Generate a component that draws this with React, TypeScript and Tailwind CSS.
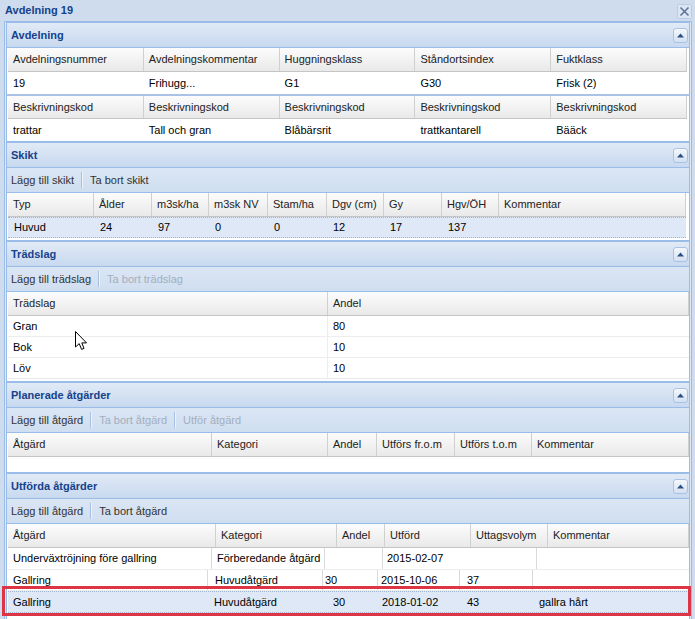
import React from 'react';

type Col = { label: string; w: string };

// collapse tool on panel headers
const ToolIcon = () => (
  <svg width="15" height="15" viewBox="0 0 15 15">
    <defs>
      <linearGradient id="toolbg" x1="0" y1="0" x2="0" y2="1">
        <stop offset="0" stopColor="#f5f8fc" />
        <stop offset="1" stopColor="#d3e0f1" />
      </linearGradient>
    </defs>
    <rect x="0.5" y="0.5" width="14" height="14" rx="2.5" fill="url(#toolbg)" stroke="#a9c1e2" />
    <path d="M4 9.5 L11 9.5 L7.5 5.5 Z" fill="#2c4f87" />
  </svg>
);

const CloseIcon = () => (
  <svg width="15" height="15" viewBox="0 0 15 15">
    <rect x="0.5" y="0.5" width="14" height="14" rx="1" fill="#dbe5f3" stroke="#b9cce6" />
    <path d="M3.5 3.5 L11.5 11.5 M11.5 3.5 L3.5 11.5" stroke="#5f7394" strokeWidth="1.6" />
  </svg>
);

const PanelHeader = ({ title }: { title: string }) => (
  <div className="flex h-[25px] items-center justify-between border-b border-[#99bce8] bg-linear-to-b from-[#e1eaf6] to-[#c8d9ef] pl-[4px] pr-[1px]">
    <span className="font-bold text-[#15428b]">{title}</span>
    <ToolIcon />
  </div>
);

const Toolbar = ({ items }: { items: { label: string; disabled?: boolean }[] }) => (
  <div className="flex h-[25px] items-center border-b border-[#99bce8] bg-linear-to-b from-[#dbe6f4] to-[#cfdef0] pl-[4px]">
    {items.map((it, i) => (
      <React.Fragment key={it.label}>
        {i > 0 && (
          <span className="mx-[7px] h-[16px] w-[2px] border-l border-r border-l-[#a7c0e2] border-r-[#eef3fa]" />
        )}
        <span className={it.disabled ? 'text-[#a3aec0]' : 'text-[#333]'}>{it.label}</span>
      </React.Fragment>
    ))}
  </div>
);

const GridHeader = ({ cols }: { cols: Col[] }) => (
  <div className="flex h-[24px] border-b border-[#c5c5c5] bg-linear-to-b from-[#fcfcfc] to-[#e9e9e9]">
    {cols.map((c) => (
      <div
        key={c.label}
        className={`${c.w} flex items-center overflow-hidden whitespace-nowrap border-r border-[#d0d0d0] pl-[5px] text-[#222]`}
      >
        {c.label}
      </div>
    ))}
  </div>
);

const skiktCols: Col[] = [
  { label: 'Typ', w: 'w-[86px]' },
  { label: 'Ålder', w: 'w-[58px]' },
  { label: 'm3sk/ha', w: 'w-[57px]' },
  { label: 'm3sk NV', w: 'w-[59px]' },
  { label: 'Stam/ha', w: 'w-[59px]' },
  { label: 'Dgv (cm)', w: 'w-[57px]' },
  { label: 'Gy', w: 'w-[58px]' },
  { label: 'Hgv/ÖH', w: 'w-[57px]' },
  { label: 'Kommentar', w: 'flex-1' },
];
const skiktRow = ['Huvud', '24', '97', '0', '0', '12', '17', '137', ''];

const tradslag = [
  ['Gran', '80'],
  ['Bok', '10'],
  ['Löv', '10'],
];

const planCols: Col[] = [
  { label: 'Åtgärd', w: 'w-[204px]' },
  { label: 'Kategori', w: 'w-[116px]' },
  { label: 'Andel', w: 'w-[49px]' },
  { label: 'Utförs fr.o.m', w: 'w-[78px]' },
  { label: 'Utförs t.o.m', w: 'w-[77px]' },
  { label: 'Kommentar', w: 'flex-1' },
];

const utfCols: Col[] = [
  { label: 'Åtgärd', w: 'w-[208px]' },
  { label: 'Kategori', w: 'w-[121px]' },
  { label: 'Andel', w: 'w-[48px]' },
  { label: 'Utförd', w: 'w-[86px]' },
  { label: 'Uttagsvolym', w: 'w-[77px]' },
  { label: 'Kommentar', w: 'flex-1' },
];

export default function App() {
  return (
    <div className="relative h-[619px] w-[695px] overflow-hidden whitespace-nowrap bg-[#cfdcee] font-['Liberation_Sans',Arial,sans-serif] text-[11px] text-black">
      {/* window title */}
      <div className="flex h-[21px] items-center justify-between pl-[5px] pr-[3px]">
        <span className="font-bold text-[#15428b]">Avdelning 19</span>
        <span className="mt-[2px]">
          <CloseIcon />
        </span>
      </div>

      <div className="ml-[4px] mr-[3px] border border-[#99bce8] bg-[#dfe8f6] px-px">
        {/* Avdelning */}
        <div className="border border-[#99bce8] bg-white">
          <PanelHeader title="Avdelning" />
          <div className="ml-px mr-[2px]">
            <div className="grid h-[24px] grid-cols-5 border-b border-[#c5c5c5] bg-linear-to-b from-[#fcfcfc] to-[#e9e9e9]">
              {['Avdelningsnummer', 'Avdelningskommentar', 'Huggningsklass', 'Ståndortsindex', 'Fuktklass'].map((t) => (
                <div key={t} className="flex items-center border-r border-[#d0d0d0] pl-[5px] text-[#222]">
                  {t}
                </div>
              ))}
            </div>
            <div className="grid h-[22px] grid-cols-5">
              {['19', 'Frihugg...', 'G1', 'G30', 'Frisk (2)'].map((t) => (
                <div key={t} className="flex items-center pl-[5px]">
                  {t}
                </div>
              ))}
            </div>
          </div>
          <div className="h-[2px] bg-[#a9c2e6]" />
          <div className="ml-px mr-[2px]">
            <div className="grid h-[23px] grid-cols-5 border-b border-[#c5c5c5] bg-linear-to-b from-[#fcfcfc] to-[#e9e9e9]">
              {[1, 2, 3, 4, 5].map((i) => (
                <div key={i} className="flex items-center border-r border-[#d0d0d0] pl-[5px] text-[#222]">
                  Beskrivningskod
                </div>
              ))}
            </div>
            <div className="grid h-[22px] grid-cols-5">
              {['trattar', 'Tall och gran', 'Blåbärsrit', 'trattkantarell', 'Bääck'].map((t) => (
                <div key={t} className="flex items-center pl-[5px]">
                  {t}
                </div>
              ))}
            </div>
          </div>
        </div>

        {/* Skikt */}
        <div className="border border-[#99bce8] bg-white pb-[2px]">
          <PanelHeader title="Skikt" />
          <Toolbar items={[{ label: 'Lägg till skikt' }, { label: 'Ta bort skikt' }]} />
          <div className="ml-px mr-[3px]">
            <GridHeader cols={skiktCols} />
            <div className="flex h-[21px] border-y border-dotted border-[#9fb3d3] bg-[#dfe8f6]">
              {skiktRow.map((v, i) => (
                <div key={i} className={`${skiktCols[i].w} flex items-center pl-[6px]`}>
                  {v}
                </div>
              ))}
            </div>
          </div>
        </div>

        {/* Trädslag */}
        <div className="border border-[#99bce8] bg-white pb-[2px]">
          <PanelHeader title="Trädslag" />
          <Toolbar items={[{ label: 'Lägg till trädslag' }, { label: 'Ta bort trädslag', disabled: true }]} />
          <div className="ml-px">
            <GridHeader
              cols={[
                { label: 'Trädslag', w: 'w-[320px]' },
                { label: 'Andel', w: 'flex-1' },
              ]}
            />
            {tradslag.map(([n, a]) => (
              <div key={n} className="flex h-[21px] border-b border-[#ededed]">
                <div className="flex w-[320px] items-center border-r border-[#ededed] pl-[5px]">{n}</div>
                <div className="flex flex-1 items-center pl-[5px]">{a}</div>
              </div>
            ))}
          </div>
        </div>

        {/* Planerade åtgärder */}
        <div className="border border-[#99bce8] bg-white">
          <PanelHeader title="Planerade åtgärder" />
          <Toolbar
            items={[
              { label: 'Lägg till åtgärd' },
              { label: 'Ta bort åtgärd', disabled: true },
              { label: 'Utför åtgärd', disabled: true },
            ]}
          />
          <div className="ml-px">
            <GridHeader cols={planCols} />
            <div className="h-[15px]" />
          </div>
        </div>

        {/* Utförda åtgärder */}
        <div className="border border-[#99bce8] bg-white pb-[10px]">
          <PanelHeader title="Utförda åtgärder" />
          <Toolbar items={[{ label: 'Lägg till åtgärd' }, { label: 'Ta bort åtgärd' }]} />
          <div className="ml-px">
            <GridHeader cols={utfCols} />
            <div className="flex h-[22px] border-b border-[#ededed]">
              <div className="flex w-[204px] items-center border-r border-[#dadada] pl-[5px]">Underväxtröjning före gallring</div>
              <div className="flex w-[113px] items-center border-r border-[#dadada] pl-[5px]">Förberedande åtgärd</div>
              <div className="w-[58px] border-r border-[#dadada]" />
              <div className="flex w-[154px] items-center border-r border-[#dadada] pl-[4px]">2015-02-07</div>
              <div className="flex-1" />
            </div>
            <div className="flex h-[21px] border-b border-[#ededed]">
              <div className="flex w-[200px] items-center border-r border-[#dadada] pl-[5px]">Gallring</div>
              <div className="flex w-[115px] items-center border-r border-[#dadada] pl-[7px]">Huvudåtgärd</div>
              <div className="flex w-[55px] items-center border-r border-[#dadada] pl-[2px]">30</div>
              <div className="flex w-[82px] items-center border-r border-[#dadada] pl-[3px]">2015-10-06</div>
              <div className="flex w-[73px] items-center border-r border-[#dadada] pl-[7px]">37</div>
              <div className="flex-1" />
            </div>
            <div className="flex h-[22px] border-y border-dotted border-[#9fb3d3] bg-[#dfe8f6]">
              <div className="flex w-[201px] items-center pl-[5px]">Gallring</div>
              <div className="flex w-[119px] items-center pl-[5px]">Huvudåtgärd</div>
              <div className="flex w-[49px] items-center pl-[5px]">30</div>
              <div className="flex w-[85px] items-center pl-[5px]">2018-01-02</div>
              <div className="flex w-[72px] items-center pl-[5px]">43</div>
              <div className="flex flex-1 items-center pl-[5px]">gallra hårt</div>
            </div>
          </div>
        </div>
      </div>

      {/* red highlight annotation */}
      <div className="pointer-events-none absolute left-[2px] top-[586px] h-[30px] w-[689px] border-[3px] border-[#dc3545]" />

      {/* mouse pointer */}
      <svg className="absolute left-[75px] top-[331px]" width="13" height="20" viewBox="0 0 13 20">
        <path
          d="M0.5 0.5 L0.5 16 L4.2 12.6 L6.6 18.4 L9 17.4 L6.8 11.9 L11.5 11.9 Z"
          fill="#fff"
          stroke="#000"
          strokeWidth="1"
        />
      </svg>
    </div>
  );
}
